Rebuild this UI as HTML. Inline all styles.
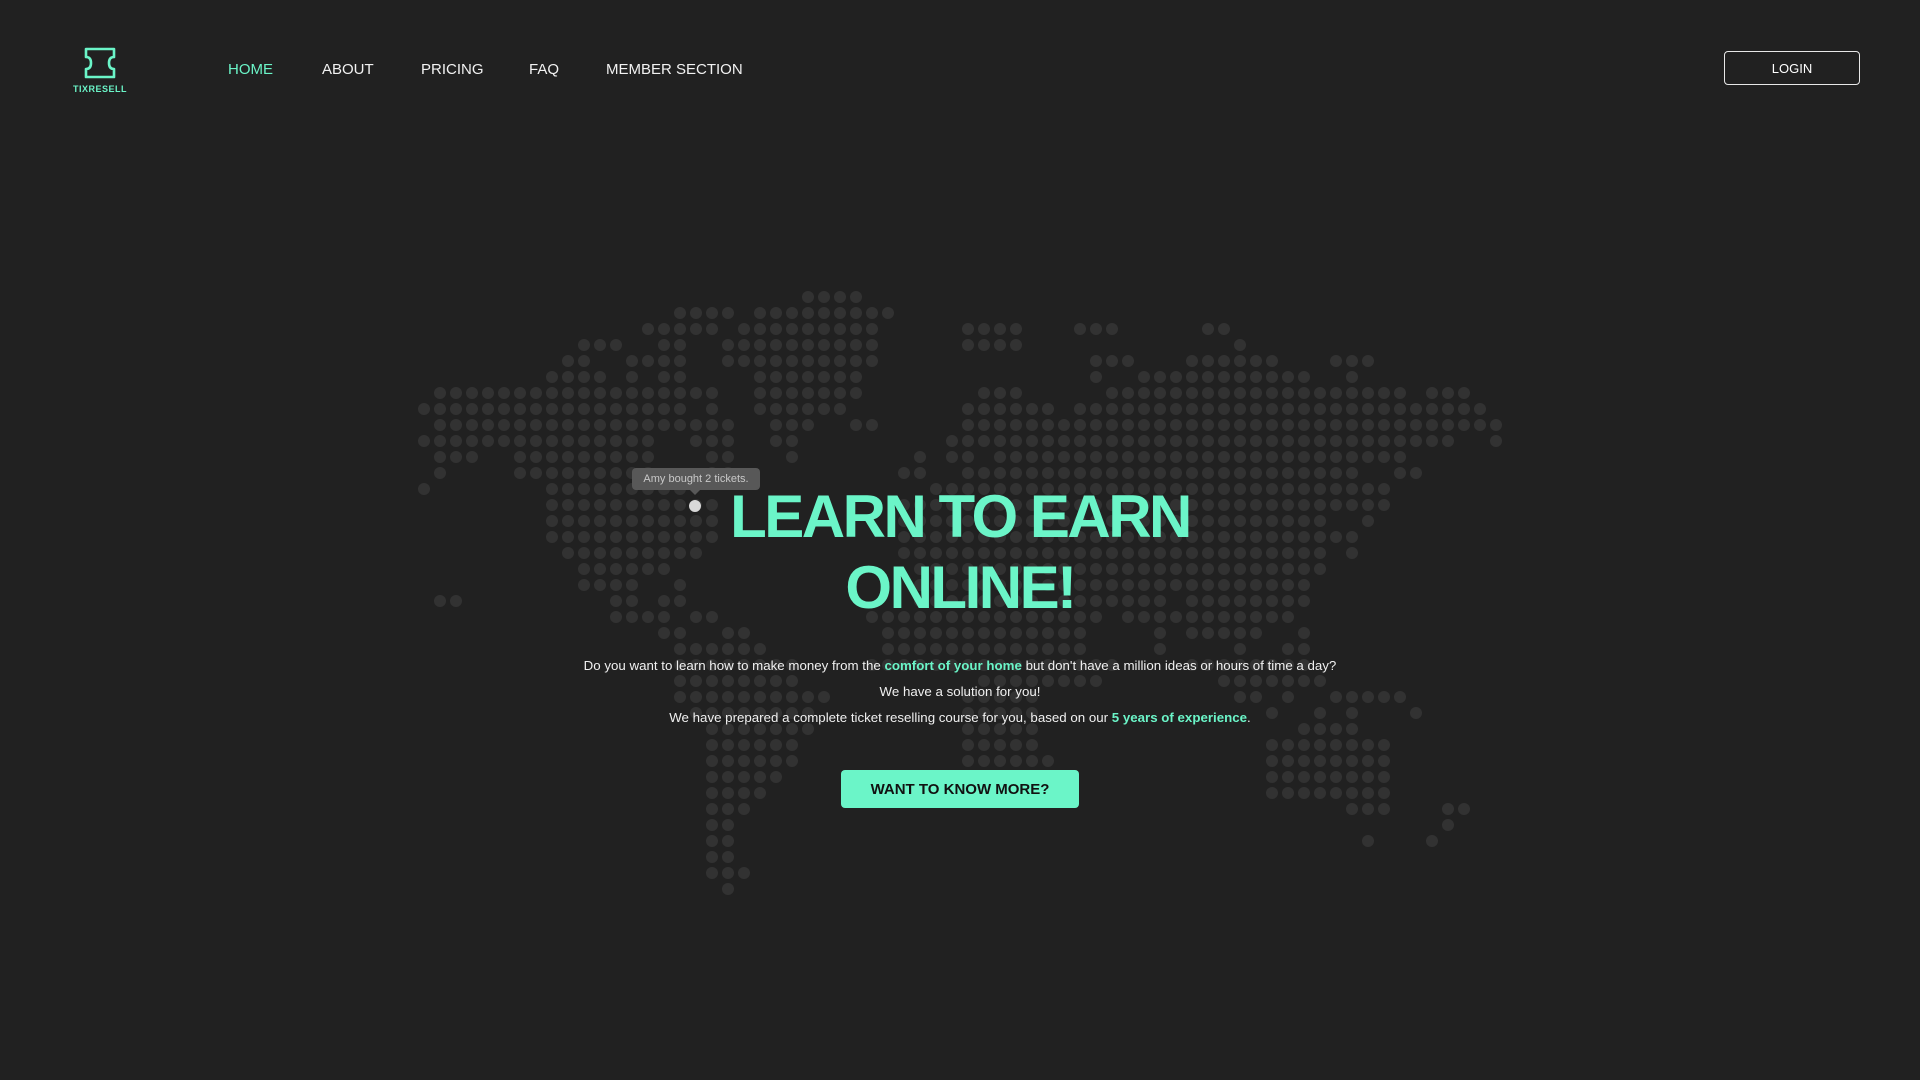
<!DOCTYPE html>
<html><head><meta charset="utf-8"><style>
html,body{margin:0;padding:0;background:#212121;width:1920px;height:1080px;overflow:hidden;font-family:"Liberation Sans",sans-serif;color:#fff}
#map{position:absolute;left:0;top:0}
.nav a{position:absolute;top:61px;font-size:15px;color:#f2f2f2;text-decoration:none}
.logo{position:absolute;left:70px;top:47px;width:60px;text-align:center}
.logo .t{font-size:9px;font-weight:bold;color:#6bf5c8;letter-spacing:0.5px;margin-top:0px}
.login{position:absolute;left:1724px;top:51px;width:134px;height:32px;border:1px solid #e8e8e8;border-radius:4px;font-size:13px;text-align:center;line-height:33px;color:#fff}
h1{position:absolute;left:0;width:1920px;top:481px;margin:0;text-align:center;color:#6bf5c8;font-size:60px;line-height:71px;font-weight:bold;letter-spacing:-2.5px}
.p{position:absolute;left:0;width:1920px;text-align:center;font-size:13.3px;color:#f0f0f0}
.p b{color:#6bf5c8}
.btn{position:absolute;left:841px;top:770px;width:238px;height:38px;background:#6bf5c8;border-radius:4px;color:#111;font-weight:bold;font-size:15px;text-align:center;line-height:39px}
.tip{position:absolute;left:632px;top:468px;width:128px;height:22px;background:#585858;border-radius:4px;color:#c8c8c8;font-size:11px;text-align:center;line-height:22px}
.tip:after{content:"";position:absolute;left:58px;top:22px;border:5px solid transparent;border-top-color:#585858}
.pin{position:absolute;left:689px;top:500px;width:12px;height:12px;border-radius:50%;background:#d8d8d8}
</style></head><body>
<svg id="map" width="1920" height="1080"></svg>
<div class="logo">
<svg width="36" height="32" viewBox="0 0 36 32"><path d="M4 2 H32 V10 Q27 10 27 16 Q27 22 32 22 V30 H4 V22 Q9 22 9 16 Q9 10 4 10 Z" fill="none" stroke="#6bf5c8" stroke-width="2.6" stroke-linejoin="round"/></svg>
<div class="t">TIXRESELL</div></div>
<div class="nav">
<a style="left:228px;color:#6bf5c8">HOME</a>
<a style="left:322px">ABOUT</a>
<a style="left:421px">PRICING</a>
<a style="left:529px">FAQ</a>
<a style="left:606px">MEMBER SECTION</a>
</div>
<div class="login">LOGIN</div>
<div class="tip">Amy bought 2 tickets.</div>
<div class="pin"></div>
<h1>LEARN TO EARN<br>ONLINE!</h1>
<div class="p" style="top:658px">Do you want to learn how to make money from the <b>comfort of your home</b> but don't have a million ideas or hours of time a day?</div>
<div class="p" style="top:684px">We have a solution for you!</div>
<div class="p" style="top:710px">We have prepared a complete ticket reselling course for you, based on our <b>5 years of experience</b>.</div>
<div class="btn">WANT TO KNOW MORE?</div>
<script>
var R=[
[[24,27]],
[[16,19],[21,29]],
[[14,18],[20,28],[34,37],[41,43],[49,50]],
[[10,12],[15,16],[19,28],[34,37],[51,51]],
[[9,10],[13,16],[19,28],[42,44],[48,53],[57,59]],
[[8,11],[13,13],[15,16],[21,27],[42,42],[45,55],[58,58]],
[[1,18],[21,27],[35,37],[43,61],[63,65]],
[[0,16],[18,18],[21,26],[34,39],[41,66]],
[[1,19],[22,24],[27,28],[34,67]],
[[0,14],[17,19],[22,23],[33,64],[67,67]],
[[1,3],[6,14],[18,19],[23,23],[31,31],[33,34],[36,61]],
[[1,1],[6,14],[18,19],[30,31],[34,58],[61,62]],
[[0,0],[8,16],[32,60]],
[[8,18],[30,60]],
[[8,18],[30,56],[59,59]],
[[8,18],[30,58]],
[[9,17],[30,56],[58,58]],
[[10,15],[31,56]],
[[10,13],[16,16],[31,55]],
[[1,2],[12,13],[15,16],[31,38],[40,46],[48,55]],
[[12,15],[17,18],[28,32],[33,42],[44,54]],
[[15,16],[19,20],[29,41],[46,46],[48,52],[55,55]],
[[16,21],[29,41],[46,46],[51,51],[54,55]],
[[16,23],[28,43],[48,55]],
[[16,23],[35,42],[50,56]],
[[16,25],[34,38],[51,52],[54,54],[57,61]],
[[17,24],[34,38],[53,53],[56,56],[58,58],[62,62]],
[[18,24],[34,38],[55,58]],
[[18,23],[34,38],[53,60]],
[[18,23],[34,39],[53,60]],
[[18,22],[53,60]],
[[18,21],[53,60]],
[[18,20],[58,60],[64,65]],
[[18,19],[64,64]],
[[18,19],[59,59],[63,63]],
[[18,19]],
[[18,20]],
[[19,19]]];
var s='';
R.forEach(function(row,r){row.forEach(function(g){for(var c=g[0];c<=g[1];c++){s+='<circle cx="'+(424+c*16)+'" cy="'+(297+r*16)+'" r="6" fill="#323232"/>';}});});
document.getElementById('map').innerHTML=s;
</script>
</body></html>
